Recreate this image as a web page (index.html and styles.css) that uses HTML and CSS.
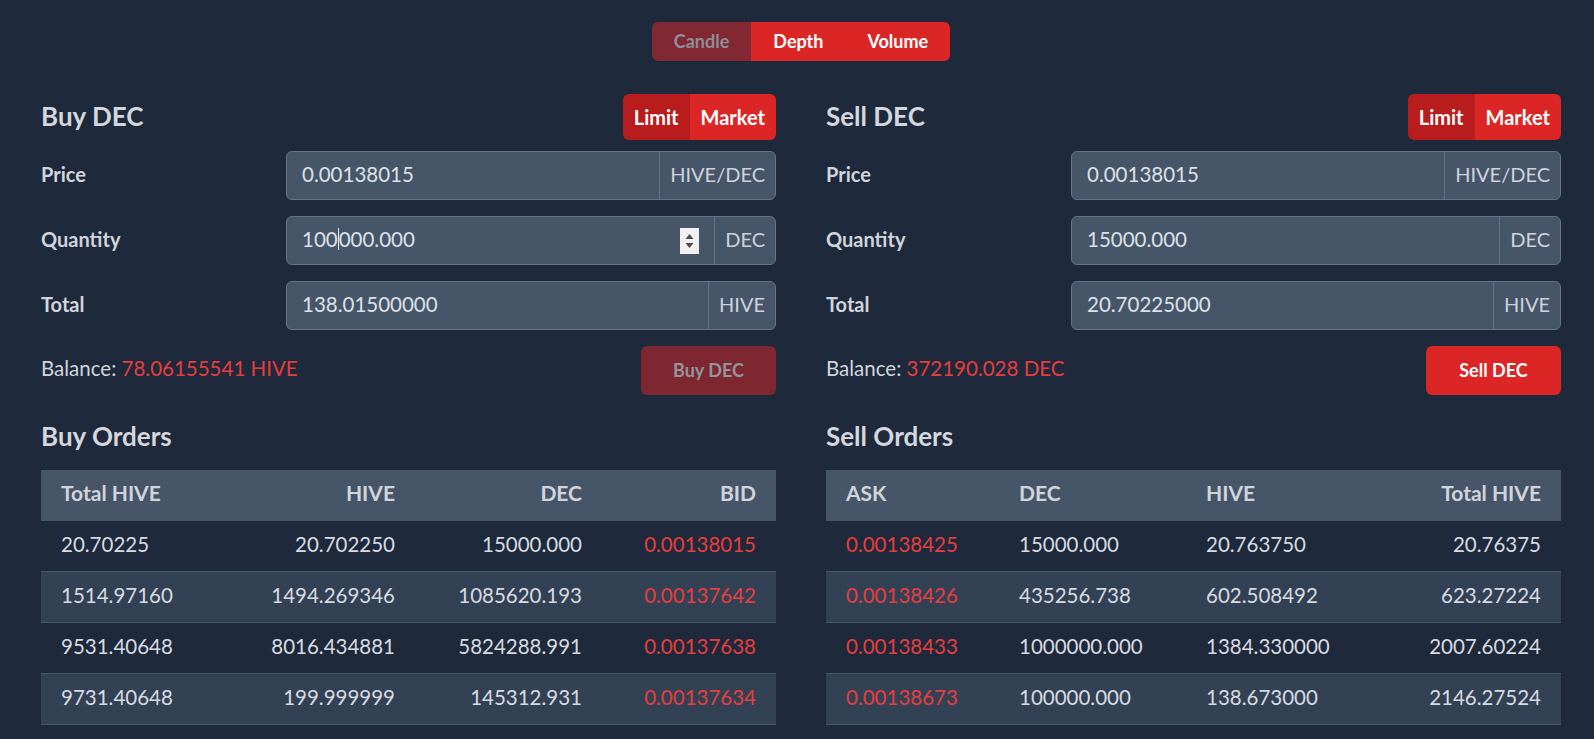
FILE: index.html
```html
<!DOCTYPE html>
<html lang="en">
<head>
<meta charset="utf-8">
<title>DEC Market</title>
<link rel="stylesheet" href="styles.css">
</head>
<body>
<div class="page">
  <div class="chart-switch">
    <div class="seg">
      <button class="seg-btn is-disabled">Candle</button>
      <button class="seg-btn">Depth</button>
      <button class="seg-btn">Volume</button>
    </div>
  </div>

  <div class="panels">
    <section class="panel">
      <div class="panel-head">
        <h2 class="panel-title">Buy DEC</h2>
        <div class="mode">
          <button class="mode-btn is-active">Limit</button>
          <button class="mode-btn">Market</button>
        </div>
      </div>
      <div class="form">
        <div class="form-row">
          <span class="label">Price</span>
          <div class="input-group"><div class="input">0.00138015</div><span class="addon">HIVE/DEC</span></div>
        </div>
        <div class="form-row">
          <span class="label">Quantity</span>
          <div class="input-group">
            <div class="input">100<span class="caret"></span>000.000
              <svg class="spinner" width="19" height="26" viewBox="0 0 19 26"><rect width="19" height="26" fill="#f1f1f1"/><path d="M9.5 6 L13.5 11 L5.5 11 Z" fill="#4d4d4d"/><path d="M5.5 15 L13.5 15 L9.5 20 Z" fill="#4d4d4d"/></svg>
            </div>
            <span class="addon">DEC</span>
          </div>
        </div>
        <div class="form-row">
          <span class="label">Total</span>
          <div class="input-group"><div class="input">138.01500000</div><span class="addon">HIVE</span></div>
        </div>
      </div>
      <div class="balance-row">
        <span class="balance">Balance: <span class="red">78.06155541 HIVE</span></span>
        <button class="action-btn is-disabled">Buy DEC</button>
      </div>
      <h2 class="orders-title">Buy Orders</h2>
      <table class="orders">
        <colgroup><col class="w173"><col class="w201"><col class="w187"><col class="w174"></colgroup>
        <thead>
          <tr><th class="left">Total HIVE</th><th>HIVE</th><th>DEC</th><th>BID</th></tr>
        </thead>
        <tbody>
          <tr><td class="left">20.70225</td><td>20.702250</td><td>15000.000</td><td class="red">0.00138015</td></tr>
          <tr><td class="left">1514.97160</td><td>1494.269346</td><td>1085620.193</td><td class="red">0.00137642</td></tr>
          <tr><td class="left">9531.40648</td><td>8016.434881</td><td>5824288.991</td><td class="red">0.00137638</td></tr>
          <tr><td class="left">9731.40648</td><td>199.999999</td><td>145312.931</td><td class="red">0.00137634</td></tr>
        </tbody>
      </table>
    </section>

    <section class="panel">
      <div class="panel-head">
        <h2 class="panel-title">Sell DEC</h2>
        <div class="mode">
          <button class="mode-btn is-active">Limit</button>
          <button class="mode-btn">Market</button>
        </div>
      </div>
      <div class="form">
        <div class="form-row">
          <span class="label">Price</span>
          <div class="input-group"><div class="input">0.00138015</div><span class="addon">HIVE/DEC</span></div>
        </div>
        <div class="form-row">
          <span class="label">Quantity</span>
          <div class="input-group"><div class="input">15000.000</div><span class="addon">DEC</span></div>
        </div>
        <div class="form-row">
          <span class="label">Total</span>
          <div class="input-group"><div class="input">20.70225000</div><span class="addon">HIVE</span></div>
        </div>
      </div>
      <div class="balance-row">
        <span class="balance">Balance: <span class="red">372190.028 DEC</span></span>
        <button class="action-btn">Sell DEC</button>
      </div>
      <h2 class="orders-title">Sell Orders</h2>
      <table class="orders">
        <colgroup><col class="w173"><col class="w187"><col class="w201"><col class="w174"></colgroup>
        <thead>
          <tr><th class="left">ASK</th><th class="left">DEC</th><th class="left">HIVE</th><th>Total HIVE</th></tr>
        </thead>
        <tbody>
          <tr><td class="left red">0.00138425</td><td class="left">15000.000</td><td class="left">20.763750</td><td>20.76375</td></tr>
          <tr><td class="left red">0.00138426</td><td class="left">435256.738</td><td class="left">602.508492</td><td>623.27224</td></tr>
          <tr><td class="left red">0.00138433</td><td class="left">1000000.000</td><td class="left">1384.330000</td><td>2007.60224</td></tr>
          <tr><td class="left red">0.00138673</td><td class="left">100000.000</td><td class="left">138.673000</td><td>2146.27524</td></tr>
        </tbody>
      </table>
    </section>
  </div>
</div>
</body>
</html>
```

FILE: styles.css
```css
* {
  box-sizing: border-box;
}

body {
  margin: 0;
  background: #1e293b;
  font-family: Lato, "Open Sans", sans-serif;
  font-size: 20px;
  color: #d1d5db;
}

button {
  font-family: inherit;
  border: 0;
  cursor: pointer;
}

.page {
  padding: 22px 33px 0 41px;
}

.chart-switch {
  display: flex;
  justify-content: center;
}

.seg {
  display: flex;
  border-radius: 6px;
  overflow: hidden;
}

.seg-btn {
  font-size: 18px;
  font-weight: 700;
  line-height: 22.5px;
  padding: 8px 22px;
  background: #dc2626;
  color: #ffffff;
}

.seg-btn.is-disabled {
  background: #822832;
  color: #8e8d98;
}

.panels {
  display: grid;
  grid-template-columns: 1fr 1fr;
  gap: 50px;
  margin-top: 33.5px;
}

.panel-head {
  display: flex;
  justify-content: space-between;
  align-items: center;
  height: 46px;
}

.panel-title,
.orders-title {
  margin: 0;
  font-size: 26px;
  line-height: 1.2;
  font-weight: 700;
  color: #d4d7dd;
}

.mode {
  display: flex;
  border-radius: 6px;
  overflow: hidden;
}

.mode-btn {
  font-size: 20px;
  font-weight: 700;
  line-height: 24px;
  padding: 11px 11px;
  background: #dc2626;
  color: #ffffff;
}

.mode-btn.is-active {
  background: #b91c1c;
}

.form {
  display: flex;
  flex-direction: column;
  gap: 16px;
  margin-top: 11px;
}

.form-row {
  display: grid;
  grid-template-columns: 1fr 2fr;
  align-items: center;
}

.label {
  font-weight: 700;
  padding-bottom: 4px;
}

.input-group {
  display: flex;
  height: 49px;
  border: 1px solid #64748b;
  border-radius: 6px;
  background: #475569;
}

.input {
  flex: 1;
  display: flex;
  align-items: center;
  padding: 0 15px 3px;
  font-size: 20.5px;
  color: #dde1e7;
}

.caret {
  display: inline-block;
  width: 1px;
  height: 22px;
  background: #e5e7eb;
}

.spinner {
  margin-left: auto;
  margin-top: 3px;
}

.addon {
  display: flex;
  align-items: center;
  padding: 0 10px 3px;
  border-left: 1px solid #64748b;
  color: #cdd3dc;
}

.balance-row {
  display: flex;
  justify-content: space-between;
  align-items: center;
  margin-top: 16px;
}

.balance {
  font-size: 20.5px;
  padding-bottom: 4px;
}

.red {
  color: #e53e3e;
}

.action-btn {
  width: 135px;
  height: 48.7px;
  border-radius: 6px;
  font-size: 18px;
  font-weight: 700;
  background: #dc2626;
  color: #ffffff;
}

.action-btn.is-disabled {
  background: #7e2731;
  color: #94949e;
}

.orders-title {
  margin: 26.6px 0 17.5px;
}

.orders {
  width: 100%;
  border-collapse: collapse;
  table-layout: fixed;
}

.w173 { width: 173px; }
.w174 { width: 174px; }
.w187 { width: 187px; }
.w201 { width: 201px; }

.orders th,
.orders td {
  padding: 11px 20px 15px;
  line-height: 24px;
  text-align: right;
  white-space: nowrap;
  border-bottom: 1px solid #475569;
}

.orders th {
  background: #475569;
  font-size: 21px;
  font-weight: 700;
}

.orders td {
  font-size: 20.5px;
  color: #d7dbe1;
}

.orders td.red {
  color: #e53e3e;
}

.orders .left {
  text-align: left;
}

.orders tbody tr:nth-child(even) td {
  background: #334155;
}
```
